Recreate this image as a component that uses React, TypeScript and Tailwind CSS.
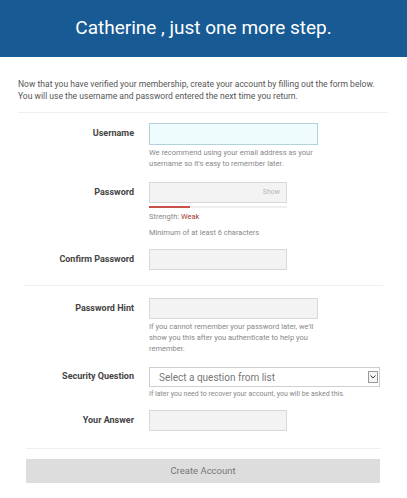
import React from 'react';

const Label: React.FC<{ children: React.ReactNode }> = ({ children }) => (
  <div className="w-[116px] shrink-0 text-right text-[9px] font-bold text-[#444]">{children}</div>
);

const Help: React.FC<{ children: React.ReactNode; className?: string }> = ({ children, className }) => (
  <p className={'text-[7.5px] leading-[11px] text-[#888] ' + (className ?? '')}>{children}</p>
);

const App: React.FC = () => {
  return (
    <div className="min-h-screen bg-white" style={{ fontFamily: 'Roboto, "Liberation Sans", sans-serif' }}>
      {/* header */}
      <div className="h-[57px] bg-[#175a94] flex items-center justify-center">
        <h1 className="text-[19px] text-white font-normal">Catherine , just one more step.</h1>
      </div>

      <div className="px-[18px]">
        <p className="mt-[21px] text-[8.55px] leading-[12px] text-[#555]">
          Now that you have verified your membership, create your account by filling out the form below.
          <br />
          You will use the username and password entered the next time you return.
        </p>
        <div className="mt-[10px] mr-[1px] h-px bg-[#efefef]" />

        {/* Username */}
        <div className="mt-[10px] flex items-center gap-[15px]">
          <Label>Username</Label>
          <div className="w-[169px] h-[22px] bg-[#effcfe] border border-[#b4d2dc]" />
        </div>
        <Help className="ml-[131px] mt-[2px]">
          We recommend using your email address as your
          <br />
          username so it's easy to remember later.
        </Help>

        {/* Password */}
        <div className="mt-[13px] flex items-center gap-[15px]">
          <Label>Password</Label>
          <div className="w-[138px] h-[21px] bg-[#f3f3f3] border border-[#d8d8d8] flex items-center justify-end pr-[6px]">
            <span className="text-[7px] text-[#b8b8b8]">Show</span>
          </div>
        </div>
        <div className="ml-[131px] mt-[3px] w-[138px] h-[2px] bg-[#eeeeee] flex">
          <div className="w-[41px] h-full bg-[#c8504a]" />
        </div>
        <Help className="ml-[131px] mt-[3px]">
          Strength: <span className="text-[#a53a30]">Weak</span>
        </Help>
        <Help className="ml-[131px] mt-[5px]">Minimum of at least 6 characters</Help>

        {/* Confirm */}
        <div className="mt-[11px] flex items-center gap-[15px]">
          <Label>Confirm Password</Label>
          <div className="w-[138px] h-[21px] bg-[#f3f3f3] border border-[#d8d8d8]" />
        </div>

        <div className="mt-[15px] mx-[6px] h-px bg-[#efefef]" />

        {/* Hint */}
        <div className="mt-[12px] flex items-center gap-[15px]">
          <Label>Password Hint</Label>
          <div className="w-[169px] h-[21px] bg-[#f3f3f3] border border-[#d8d8d8]" />
        </div>
        <Help className="ml-[131px] mt-[2px]">
          If you cannot remember your password later, we'll
          <br />
          show you this after you authenticate to help you
          <br />
          remember.
        </Help>

        {/* Security question */}
        <div className="mt-[13px] flex items-center gap-[15px]">
          <Label>Security Question</Label>
          <div className="w-[231px] h-[20px] bg-white border border-[#cfcfcf] flex items-center pl-[9px] pr-[1px]">
            <span className="flex-1 text-[10px] text-[#777]">Select a question from list</span>
            <span className="w-[10px] h-[12px] border border-[#999] bg-[#f4f4f4] flex items-center justify-center">
              <svg width="6" height="4" viewBox="0 0 6 4">
                <path d="M0.5 0.5 L3 3 L5.5 0.5" fill="none" stroke="#333" strokeWidth="1" />
              </svg>
            </span>
          </div>
        </div>
        <Help className="ml-[131px] mt-[2px] text-[7px]">
          If later you need to recover your account, you will be asked this.
        </Help>

        {/* Answer */}
        <div className="mt-[10px] flex items-center gap-[15px]">
          <Label>Your Answer</Label>
          <div className="w-[138px] h-[21px] bg-[#f3f3f3] border border-[#d8d8d8]" />
        </div>

        <div className="mt-[17px] mx-[8px] h-px bg-[#efefef]" />

        <button className="mt-[10px] mx-[8px] w-[354px] h-[24px] bg-[#dddddd] text-[9.5px] text-[#777] flex items-center justify-center">
          Create Account
        </button>
      </div>
    </div>
  );
};

export default App;
